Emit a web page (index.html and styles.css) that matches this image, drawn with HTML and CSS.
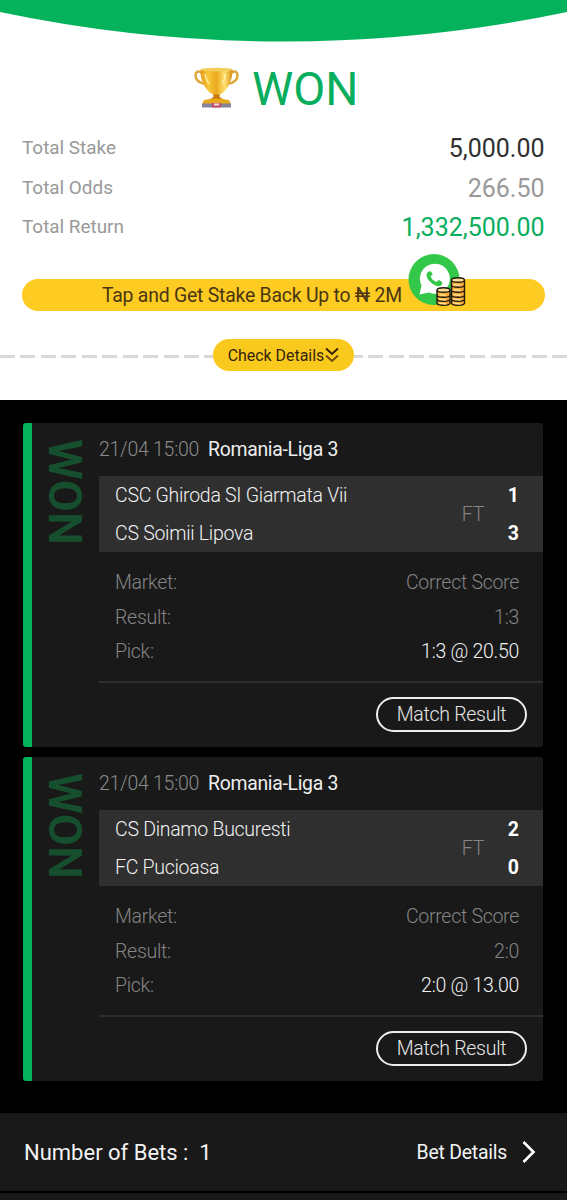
FILE: index.html
```html
<!DOCTYPE html>
<html lang="en">
<head>
<meta charset="utf-8">
<title>Bet result</title>
<link rel="stylesheet" href="styles.css">
</head>
<body>
<main class="page">
  <section class="summary">
    <svg class="arc" viewBox="0 0 567 42" width="567" height="42"><path d="M0 0H567V12A1377 1377 0 0 1 0 12Z" fill="#05b25c"/></svg>
    <h1 class="headline">
      <svg class="trophy" viewBox="0 0 46 42" width="46" height="42">
        <defs>
          <linearGradient id="gold" x1="0" x2="1"><stop offset="0" stop-color="#e39a14"/><stop offset=".25" stop-color="#f8c83a"/><stop offset=".5" stop-color="#eba91f"/><stop offset=".76" stop-color="#ffe070"/><stop offset="1" stop-color="#d48d12"/></linearGradient>
        </defs>
        <path d="M8 6C4 3 1.500 5 1.500 8c0 5 4 8 10 9M37 6c4-3 6.500-1 6.500 2 0 5-4 8-10 9" fill="none" stroke="#dfa838" stroke-width="2.500"/>
        <path d="M19 25h7l-.5 5 6.500 4H13l6.500-4z" fill="#c97908"/>
        <path d="M6.500 2.500c8 2 24 2 32 0 .5 10-5 20-10 23.500-3 2-9 2-12 0C11 22 6 13 6.500 2.500z" fill="url(#gold)"/>
        <ellipse cx="22.500" cy="2.600" rx="16" ry="1.800" fill="#f3cd59"/>
        <path d="M11 7c1 5 2 7 4 10M31 7c0 4-1 7-3 9" fill="none" stroke="#fff0a8" stroke-width="1.800" opacity=".8"/>
        <path d="M10 33q12-3 25 0l2 4H8z" fill="#e7a91c"/>
        <path d="M8 36.500h29v4H8z" fill="#858399"/>
        <path d="M18 36h9v4.500h-9z" fill="#c8506c"/><path d="M20 36.500h5v2h-5z" fill="#eee0da"/>
      </svg>
      <span>WON</span>
    </h1>
    <dl class="totals">
      <div class="total"><dt>Total Stake</dt><dd class="dark">5,000.00</dd></div>
      <div class="total"><dt>Total Odds</dt><dd>266.50</dd></div>
      <div class="total"><dt>Total Return</dt><dd class="green">1,332,500.00</dd></div>
    </dl>
    <div class="promo">
      <span class="promo-text">Tap and Get Stake Back Up to ₦ 2M</span>
      <svg class="promo-icon" viewBox="0 0 60 54" width="60" height="54">
        <circle cx="26" cy="25.500" r="25.500" fill="#34c84a"/>
        <path d="M11.500 40.500l2-9A15 15 0 1 1 21 38.500z" fill="#fff"/>
        <path d="M21 17.500c-3.500 1.500-3 5.500 0 9 4 5 10 7.500 13 4 1-2 0-3-3.500-4.500l-2 2c-3-1-5-3-6-6l2-1c0-2-1.500-4.500-3.500-3.500z" fill="#34c84a"/>
        <g fill="#f9a938" stroke="#221b12" stroke-width="1.400">
          <g><path d="M29 45v4c0 3 13 3 13 0v-4M29 41v4c0 3 13 3 13 0v-4M29 36v5c0 3 13 3 13 0v-5"/><ellipse cx="35.500" cy="36" rx="6.500" ry="2.300" fill="#ffdf91"/></g>
          <g><path d="M43.500 45v4c0 3 13 3 13 0v-4M43.500 41v4c0 3 13 3 13 0v-4M43.500 36v5c0 3 13 3 13 0v-5M43.500 31v5c0 3 13 3 13 0v-5M43.500 26v5c0 3 13 3 13 0v-5"/><ellipse cx="50" cy="26" rx="6.500" ry="2.300" fill="#ffdf91"/></g>
        </g>
        <path d="M31 40.500l7 1M31 45l7 1M31 49l7 1M45.500 30.500l7 1M45.500 35.500l7 1M45.500 40.500l7 1M45.500 45l7 1M45.500 49l7 1" stroke="#ffe48c" stroke-width="1.500"/>
      </svg>
    </div>
    <div class="divider">
      <div class="check"><span>Check Details</span><svg viewBox="0 0 14 16" width="14" height="16" fill="none" stroke-width="2"><path d="M1 1.500l6 5.500 6-5.500" stroke="#35230a"/><path d="M1 8.500l6 5.500 6-5.500" stroke="#6d4a09"/></svg></div>
    </div>
  </section>

  <section class="bets">
    <article class="card">
      <div class="status"><span>WON</span></div>
      <div class="body">
        <div class="event"><span class="date">21/04 15:00</span><span class="league">Romania-Liga 3</span></div>
        <div class="match">
          <div class="teams"><span>CSC Ghiroda SI Giarmata Vii</span><span>CS Soimii Lipova</span></div>
          <span class="period">FT</span>
          <div class="scores"><span>1</span><span>3</span></div>
        </div>
        <div class="facts">
          <div class="fact"><span>Market:</span><span>Correct Score</span></div>
          <div class="fact"><span>Result:</span><span>1:3</span></div>
          <div class="fact"><span>Pick:</span><span class="pick">1:3 @ 20.50</span></div>
        </div>
        <div class="action"><span class="button">Match Result</span></div>
      </div>
    </article>
    <article class="card">
      <div class="status"><span>WON</span></div>
      <div class="body">
        <div class="event"><span class="date">21/04 15:00</span><span class="league">Romania-Liga 3</span></div>
        <div class="match">
          <div class="teams"><span>CS Dinamo Bucuresti</span><span>FC Pucioasa</span></div>
          <span class="period">FT</span>
          <div class="scores"><span>2</span><span>0</span></div>
        </div>
        <div class="facts">
          <div class="fact"><span>Market:</span><span>Correct Score</span></div>
          <div class="fact"><span>Result:</span><span>2:0</span></div>
          <div class="fact"><span>Pick:</span><span class="pick">2:0 @ 13.00</span></div>
        </div>
        <div class="action"><span class="button">Match Result</span></div>
      </div>
    </article>
  </section>

  <footer class="footer">
    <span class="count">Number of Bets :&nbsp; 1</span>
    <span class="details">Bet Details</span>
    <svg viewBox="0 0 14 24" width="14" height="24" fill="none" stroke="#fff" stroke-width="2.600"><path d="M1.500 2l10 10-10 10"/></svg>
  </footer>
  <div class="next"></div>
</main>
</body>
</html>
```

FILE: styles.css
```css
* { box-sizing: border-box; }
body { margin: 0; background: #000; font-family: Roboto, "Noto Sans", sans-serif; }
.page { width: 567px; height: 1200px; overflow: hidden; display: flex; flex-direction: column; }
.summary { height: 399.5px; flex: none; background: #fff; }
.arc { display: block; }
.headline { margin: 0; padding: 25px 0 0 194px; height: 86px; display: flex; gap: 12px; color: #09ae5d; font-weight: 400; font-size: 46.5px; line-height: 44px; }
.trophy { flex: none; }
.totals { margin: 0; padding: 0 22.5px 0 22px; }
.total { height: 39.5px; display: flex; align-items: center; justify-content: space-between; }
dt { color: #999; font-size: 18.9px; }
dd { margin: 0; color: #999; font-size: 25px; padding-top: 2px; }
.dark { color: #303030; }
.green { color: #09ae5d; }
.promo { position: relative; margin: 32.5px 22px 0; height: 32px; border-radius: 16px; background: #fecb22; color: #4a3614; font-size: 19.4px; letter-spacing: -.22px; line-height: 33px; padding-left: 80px; white-space: nowrap; }
.promo-icon { position: absolute; left: 386px; top: -25px; }
.divider { margin-top: 28px; height: 32px; display: flex; justify-content: center; background: repeating-linear-gradient(90deg, #d8d8d8 0 15px, transparent 15px 20.45px) 0 16px / 100% 3px no-repeat; }
.check { width: 141px; height: 32px; border-radius: 16px; background: #fac91e; color: #35240b; display: flex; align-items: center; justify-content: center; gap: 1px; font-size: 15.9px; white-space: nowrap; }
.bets { padding: 23.5px 24px 32px 23px; display: flex; flex-direction: column; gap: 10px; flex: none; }
.card { height: 324px; display: flex; background: #191919; border-left: 9px solid #05b25c; border-radius: 3px; }
.status { width: 67px; padding: 16px 0 0 10px; flex: none; }
.status span { display: block; writing-mode: vertical-rl; color: #154f2d; font-size: 46.5px; font-weight: 600; line-height: 46px; }
.body { flex: 1; min-width: 0; font-weight: 300; font-size: 19.5px; letter-spacing: -.28px; }
.event { height: 53px; display: flex; align-items: center; gap: 9px; color: #8b8b8b; }
.league { color: #eee; font-size: 19.4px; font-weight: 400; letter-spacing: -.3px; }
.match { height: 76px; background: #2f2f2f; color: #f2f2f2; display: flex; align-items: center; padding: 1px 24px 0 16px; }
.teams, .scores { display: flex; flex-direction: column; line-height: 38px; white-space: nowrap; }
.teams { flex: 1; }
.period { width: 46px; color: #858585; }
.scores { font-weight: 700; font-size: 19.5px; letter-spacing: 0; color: #fff; }
.facts { height: 131px; padding: 13px 24px 0 16px; border-bottom: 2px solid #2e2e2e; }
.fact { height: 34.7px; display: flex; align-items: center; justify-content: space-between; color: #858585; }
.fact .pick { color: #f2f2f2; }
.action { padding: 14px 16px 0 0; display: flex; justify-content: flex-end; }
.button { width: 151px; height: 35px; border: 2px solid #eee; border-radius: 18px; color: #e6e6e6; text-align: center; line-height: 31px; }
.footer { flex: none; height: 78px; padding: 0 31px 0 24px; background: #191919; color: #f3f3f3; display: flex; align-items: center; }
.count { font-size: 22px; flex: 1; }
.details { font-size: 19.4px; letter-spacing: -.22px; margin-right: 15px; }
.next { height: 8px; margin-top: 2px; background: #191919; flex: none; }
```
